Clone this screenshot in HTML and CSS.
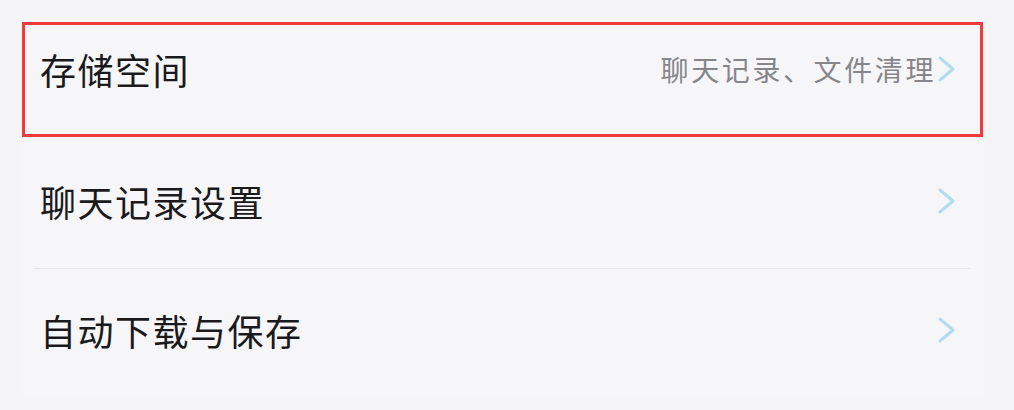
FILE: index.html
```html
<!DOCTYPE html>
<html lang="zh-CN">
<head>
<meta charset="utf-8">
<link rel="stylesheet" href="styles.css">
</head>
<body>
<div class="page">
  <div class="list">
    <div class="row row-highlight">
      <span class="title">存储空间</span>
      <span class="right">
        <span class="sub">聊天记录、文件清理</span>
        <svg class="chev" viewBox="0 0 17 26" width="17" height="26"><polyline points="2,2 15,13 2,24" /></svg>
      </span>
    </div>
    <div class="row row-plain">
      <span class="title">聊天记录设置</span>
      <span class="right">
        <svg class="chev" viewBox="0 0 17 26" width="17" height="26"><polyline points="2,2 15,13 2,24" /></svg>
      </span>
    </div>
    <div class="divider"></div>
    <div class="row row-plain row-last">
      <span class="title">自动下载与保存</span>
      <span class="right">
        <svg class="chev" viewBox="0 0 17 26" width="17" height="26"><polyline points="2,2 15,13 2,24" /></svg>
      </span>
    </div>
  </div>
</div>
</body>
</html>
```
FILE: styles.css
```css
html, body {
  margin: 0;
  padding: 0;
  background: #f5f5f8;
}
body {
  font-family: "Noto Sans CJK SC", "Noto Sans", sans-serif;
  width: 1014px;
  height: 410px;
  overflow: hidden;
}
.page {
  padding: 22px 31px 0 22px;
}
.list {
  display: flex;
  flex-direction: column;
  background: #f6f6f9;
}
.row {
  display: flex;
  align-items: center;
  justify-content: space-between;
  box-sizing: border-box;
}
.row-highlight {
  height: 115px;
  border: 3px solid #f03b3d;
  padding: 0 25px 21px 15px;
}
.row-plain {
  height: 131px;
  padding: 0 28px 4px 18px;
}
.row-last {
  height: 128px;
  padding-bottom: 6px;
}
.title {
  font-size: 36px;
  letter-spacing: 1.5px;
  color: #1a1a1c;
  font-weight: 400;
}
.right {
  display: flex;
  align-items: center;
  gap: 2px;
}
.sub {
  font-size: 28px;
  letter-spacing: 2.6px;
  color: #86868a;
}
.chev polyline {
  fill: none;
  stroke: #b1dcef;
  stroke-width: 3;
  stroke-linecap: round;
  stroke-linejoin: round;
}
.divider {
  height: 1px;
  background: #e6e6ea;
  margin: 0 13px 0 12px;
}
```
